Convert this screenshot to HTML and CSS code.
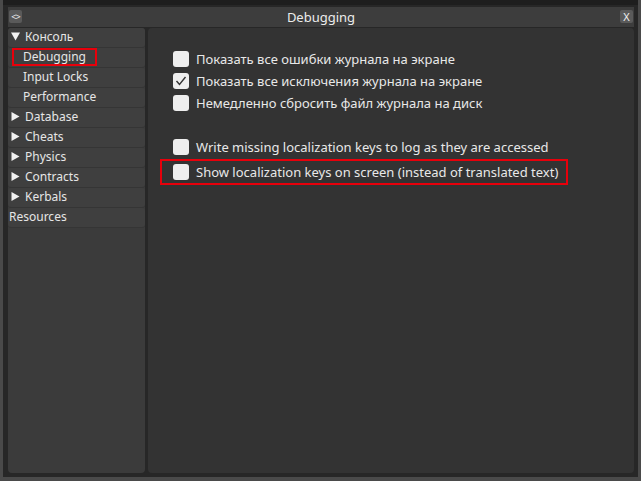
FILE: index.html
```html
<!DOCTYPE html>
<html>
<head>
<meta charset="utf-8">
<link rel="stylesheet" href="styles.css">
</head>
<body>
<div class="window">
  <div class="titlebar">
    <span class="tbtn left">&lt;&gt;</span>
    <span class="title">Debugging</span>
    <span class="tbtn right">X</span>
  </div>
  <div class="content">
    <div class="sidebar">
      <div class="item group"><svg class="arrow" width="9" height="9" viewBox="0 0 9 9"><path d="M0 0.5 H9 L4.5 8.5 Z" fill="#f2f2f2"/></svg>Консоль</div>
      <div class="item sub selected"><span class="hl">Debugging</span></div>
      <div class="item sub">Input Locks</div>
      <div class="item sub">Performance</div>
      <div class="item group"><svg class="arrow" width="9" height="9" viewBox="0 0 9 9"><path d="M0.5 0 V9 L8.5 4.5 Z" fill="#f2f2f2"/></svg>Database</div>
      <div class="item group"><svg class="arrow" width="9" height="9" viewBox="0 0 9 9"><path d="M0.5 0 V9 L8.5 4.5 Z" fill="#f2f2f2"/></svg>Cheats</div>
      <div class="item group"><svg class="arrow" width="9" height="9" viewBox="0 0 9 9"><path d="M0.5 0 V9 L8.5 4.5 Z" fill="#f2f2f2"/></svg>Physics</div>
      <div class="item group"><svg class="arrow" width="9" height="9" viewBox="0 0 9 9"><path d="M0.5 0 V9 L8.5 4.5 Z" fill="#f2f2f2"/></svg>Contracts</div>
      <div class="item group"><svg class="arrow" width="9" height="9" viewBox="0 0 9 9"><path d="M0.5 0 V9 L8.5 4.5 Z" fill="#f2f2f2"/></svg>Kerbals</div>
      <div class="item plain">Resources</div>
    </div>
    <div class="main">
      <div class="opts">
        <label class="opt"><span class="box"></span>Показать все ошибки журнала на экране</label>
        <label class="opt"><span class="box"><svg width="12" height="10" viewBox="0 0 12 10"><path d="M1.5 5 L4.5 8.5 L10.5 1" fill="none" stroke="#333" stroke-width="1.4"/></svg></span>Показать все исключения журнала на экране</label>
        <label class="opt"><span class="box"></span>Немедленно сбросить файл журнала на диск</label>
      </div>
      <div class="opts second">
        <label class="opt"><span class="box"></span>Write missing localization keys to log as they are accessed</label>
        <label class="opt marked"><span class="box"></span>Show localization keys on screen (instead of translated text)</label>
      </div>
    </div>
  </div>
</div>
</body>
</html>
```
FILE: styles.css
```css
html, body { margin: 0; padding: 0; }
body {
  width: 641px; height: 481px; overflow: hidden;
  background: #4a4a4a;
  font-family: "Noto Sans", "Open Sans", sans-serif;
  color: #e6e6e6;
}
.window {
  margin: 0 3px 0 3px;
  border-top: 5px solid #1e1e1e;
  height: 477px;
  box-sizing: border-box;
  background: #272727;
  padding: 2px 4px 4px 5px;
  display: flex;
  flex-direction: column;
}
.titlebar {
  height: 20px;
  background: #3d3d3d;
  display: flex;
  align-items: center;
  justify-content: center;
  position: relative;
  flex: none;
}
.title { font-size: 13px; color: #ececec; }
.tbtn {
  position: absolute;
  top: 3px;
  width: 13px; height: 13px;
  background: #5a5a5a;
  border-radius: 2px;
  font-size: 10px;
  line-height: 13px;
  text-align: center;
  color: #f0f0f0;
}
.tbtn.left { left: 1px; font-size: 9px; letter-spacing: -1px; }
.tbtn.right { right: 1px; font-size: 11px; }
.content {
  flex: 1;
  display: flex;
  gap: 3px;
  padding-top: 1px;
}
.sidebar {
  width: 137px;
  background: #3b3b3b;
  border-radius: 4px;
  display: flex;
  flex-direction: column;
}
.item {
  height: 19px;
  box-sizing: border-box;
  padding-bottom: 2px;
  margin-bottom: 1px;
  background: #3f3f3f;
  border-radius: 3px;
  font-size: 12px;
  display: flex;
  align-items: center;
  box-shadow: 0 1px 0 #353535;
}
.item.group { padding-left: 3px; }
.item.sub { padding-left: 15px; }
.item.plain { padding-left: 1px; }
.arrow { margin-right: 5px; flex: none; }
.hl {
  display: inline-block;
  margin-left: -11px;
  padding: 0 9px 0 9px;
  height: 14px;
  line-height: 14px;
  border: 2px solid #e8000b;
}
.main {
  flex: 1;
  background: #333333;
  border-radius: 4px;
  padding: 20px 0 0 12px;
}
.opts { display: flex; flex-direction: column; }
.opts.second { margin-top: 22px; }
.opt {
  display: flex;
  align-items: center;
  height: 18px;
  font-size: 13px;
  color: #e8e8e8;
  white-space: nowrap;
  align-self: flex-start;
  padding: 0 8px 0 11px;
  border: 2px solid transparent;
}
.opt.marked { border-color: #e8000b; padding-top: 2px; padding-bottom: 2px; margin-top: 1px; }
.box {
  width: 16px; height: 16px;
  background: #eeeeee;
  border-radius: 3px;
  margin-right: 7px;
  display: flex; align-items: center; justify-content: center;
}
```
